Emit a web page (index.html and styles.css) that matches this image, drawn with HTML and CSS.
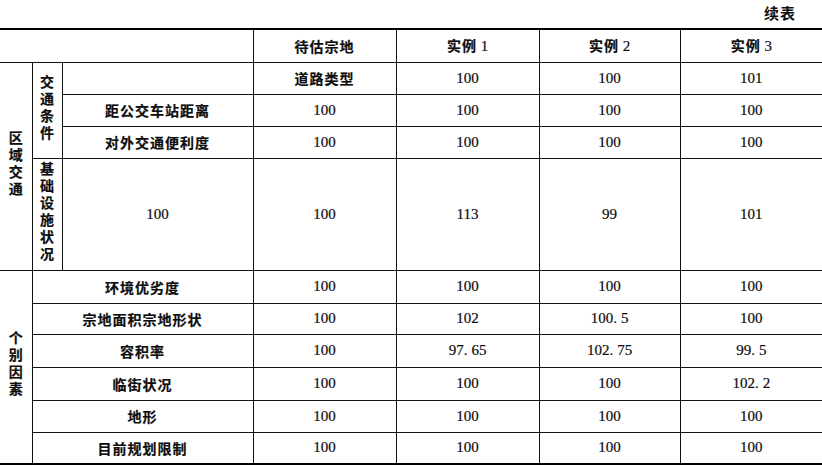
FILE: index.html
```html
<!DOCTYPE html>
<html lang="zh">
<head>
<meta charset="utf-8">
<link rel="stylesheet" href="styles.css">
</head>
<body>
<div class="caption"><span class="zh">续表</span></div>
<table class="tbl">
  <colgroup>
    <col class="c0"><col class="c1"><col class="c2"><col class="c3"><col class="c4"><col class="c5"><col class="c6">
  </colgroup>
  <tr class="h33 head">
    <td colspan="3" class="l0"></td>
    <td class="zh">待估宗地</td>
    <td><span class="zh">实例</span> 1</td>
    <td><span class="zh">实例</span> 2</td>
    <td><span class="zh">实例</span> 3</td>
  </tr>
  <tr class="h32">
    <td rowspan="4" class="l0"><span class="vt zh">区域交通</span></td>
    <td rowspan="3"><span class="vt zh">交通条件</span></td>
    <td></td>
    <td class="zh">道路类型</td>
    <td>100</td><td>100</td><td>101</td>
  </tr>
  <tr class="h32">
    <td class="zh">距公交车站距离</td>
    <td>100</td><td>100</td><td>100</td><td>100</td>
  </tr>
  <tr class="h32">
    <td class="zh">对外交通便利度</td>
    <td>100</td><td>100</td><td>100</td><td>100</td>
  </tr>
  <tr class="h112">
    <td><span class="vt zh">基础设施状况</span></td>
    <td>100</td>
    <td>100</td><td>113</td><td>99</td><td>101</td>
  </tr>
  <tr class="h33">
    <td rowspan="6" class="l0 bottom"><span class="vt zh">个别因素</span></td>
    <td colspan="2" class="zh">环境优劣度</td>
    <td>100</td><td>100</td><td>100</td><td>100</td>
  </tr>
  <tr class="h31">
    <td colspan="2" class="zh">宗地面积宗地形状</td>
    <td>100</td><td>102</td><td>100<span class="dot">.</span>5</td><td>100</td>
  </tr>
  <tr class="h33">
    <td colspan="2" class="zh">容积率</td>
    <td>100</td><td>97<span class="dot">.</span>65</td><td>102<span class="dot">.</span>75</td><td>99<span class="dot">.</span>5</td>
  </tr>
  <tr class="h33">
    <td colspan="2" class="zh">临街状况</td>
    <td>100</td><td>100</td><td>100</td><td>102<span class="dot">.</span>2</td>
  </tr>
  <tr class="h32">
    <td colspan="2" class="zh">地形</td>
    <td>100</td><td>100</td><td>100</td><td>100</td>
  </tr>
  <tr class="h32 last">
    <td colspan="2" class="zh">目前规划限制</td>
    <td>100</td><td>100</td><td>100</td><td>100</td>
  </tr>
</table>
</body>
</html>
```

FILE: styles.css
```css
html, body {
  margin: 0;
  padding: 0;
  background: #fff;
  color: #0d0d0d;
}
body {
  width: 822px;
  font-family: "Liberation Serif", "Noto Sans CJK SC", serif;
  font-size: 15px;
}
.zh {
  font-family: "Noto Sans CJK SC", sans-serif;
  font-weight: 700;
  font-size: 14px;
  letter-spacing: 1px;
}
.caption {
  height: 28px;
  display: flex;
  align-items: flex-start;
  justify-content: flex-end;
  padding: 2px 26px 0 0;
  box-sizing: border-box;
}
.caption .zh {
  font-size: 15px;
  letter-spacing: 1px;
}
.tbl {
  width: 822px;
  border-collapse: collapse;
  table-layout: fixed;
}
.c0 { width: 32px; }
.c1 { width: 30px; }
.c2 { width: 191px; }
.c3 { width: 143px; }
.c4 { width: 143px; }
.c5 { width: 141px; }
.c6 { width: 142px; }
.tbl td {
  border: 1px solid #111;
  padding: 0;
  text-align: center;
  vertical-align: middle;
  line-height: 1;
  -webkit-text-stroke: 0.2px #0d0d0d;
}
.tbl td.l0 { border-left: none; }
.tbl td:last-child { border-right: none; }
.tbl tr.head td { border-top: 2px solid #000; }
.tbl tr.last td,
.tbl td.bottom { border-bottom: 2px solid #000; }
.h31 { height: 31px; }
.h32 { height: 32px; }
.h33 { height: 33px; }
.h112 { height: 112px; }
.vt {
  display: inline-block;
  writing-mode: vertical-rl;
  letter-spacing: 3px;
  line-height: 1;
}
.dot {
  margin-right: 4px;
}
```
